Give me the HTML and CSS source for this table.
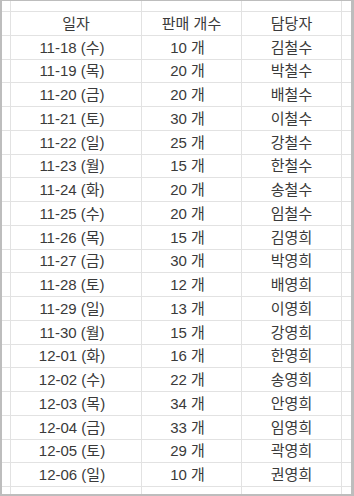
FILE: index.html
```html
<!DOCTYPE html>
<html lang="ko">
<head>
<meta charset="utf-8">
<link rel="stylesheet" href="styles.css">
</head>
<body>
<div class="frame">
<div class="sheet">
<div></div><div></div><div></div><div></div><div></div>
<div></div><div class="c hd">일자</div><div class="c hd">판매 개수</div><div class="c hd">담당자</div><div></div>
<div></div><div class="c d">11-18 (수)</div><div class="c d">10 개</div><div class="c">김철수</div><div></div>
<div></div><div class="c d">11-19 (목)</div><div class="c d">20 개</div><div class="c">박철수</div><div></div>
<div></div><div class="c d">11-20 (금)</div><div class="c d">20 개</div><div class="c">배철수</div><div></div>
<div></div><div class="c d">11-21 (토)</div><div class="c d">30 개</div><div class="c">이철수</div><div></div>
<div></div><div class="c d">11-22 (일)</div><div class="c d">25 개</div><div class="c">강철수</div><div></div>
<div></div><div class="c d">11-23 (월)</div><div class="c d">15 개</div><div class="c">한철수</div><div></div>
<div></div><div class="c d">11-24 (화)</div><div class="c d">20 개</div><div class="c">송철수</div><div></div>
<div></div><div class="c d">11-25 (수)</div><div class="c d">20 개</div><div class="c">임철수</div><div></div>
<div></div><div class="c d">11-26 (목)</div><div class="c d">15 개</div><div class="c">김영희</div><div></div>
<div></div><div class="c d">11-27 (금)</div><div class="c d">30 개</div><div class="c">박영희</div><div></div>
<div></div><div class="c d">11-28 (토)</div><div class="c d">12 개</div><div class="c">배영희</div><div></div>
<div></div><div class="c d">11-29 (일)</div><div class="c d">13 개</div><div class="c">이영희</div><div></div>
<div></div><div class="c d">11-30 (월)</div><div class="c d">15 개</div><div class="c">강영희</div><div></div>
<div></div><div class="c d">12-01 (화)</div><div class="c d">16 개</div><div class="c">한영희</div><div></div>
<div></div><div class="c d">12-02 (수)</div><div class="c d">22 개</div><div class="c">송영희</div><div></div>
<div></div><div class="c d">12-03 (목)</div><div class="c d">34 개</div><div class="c">안영희</div><div></div>
<div></div><div class="c d">12-04 (금)</div><div class="c d">33 개</div><div class="c">임영희</div><div></div>
<div></div><div class="c d">12-05 (토)</div><div class="c d">29 개</div><div class="c">곽영희</div><div></div>
<div></div><div class="c d">12-06 (일)</div><div class="c d">10 개</div><div class="c">권영희</div><div></div>
<div></div><div></div><div></div><div></div><div></div>
</div>
</div>
</body>
</html>
```
FILE: styles.css
```css
html, body {
  margin: 0;
  padding: 0;
  background: #ffffff;
}
.frame {
  width: 354px;
  height: 496px;
  box-sizing: border-box;
  border-style: solid;
  border-color: #bdbdbd;
  border-width: 1px 3px 2px 2px;
  background: #ffffff;
}
.sheet {
  display: grid;
  grid-template-columns: 8px 130px 99px 99px 9px;
  grid-template-rows: 10px repeat(20, 22.75px) 7px;
  gap: 1px;
  background: #e2e2e2;
  height: 100%;
}
.sheet > div {
  background: #ffffff;
}
.c {
  display: flex;
  align-items: center;
  justify-content: center;
  font-family: "Liberation Sans", "Noto Sans CJK KR", sans-serif;
  font-size: 15px;
  color: #3a3a3a;
  white-space: nowrap;
  line-height: 1;
}
.d {
  padding-right: 8px;
}
```
